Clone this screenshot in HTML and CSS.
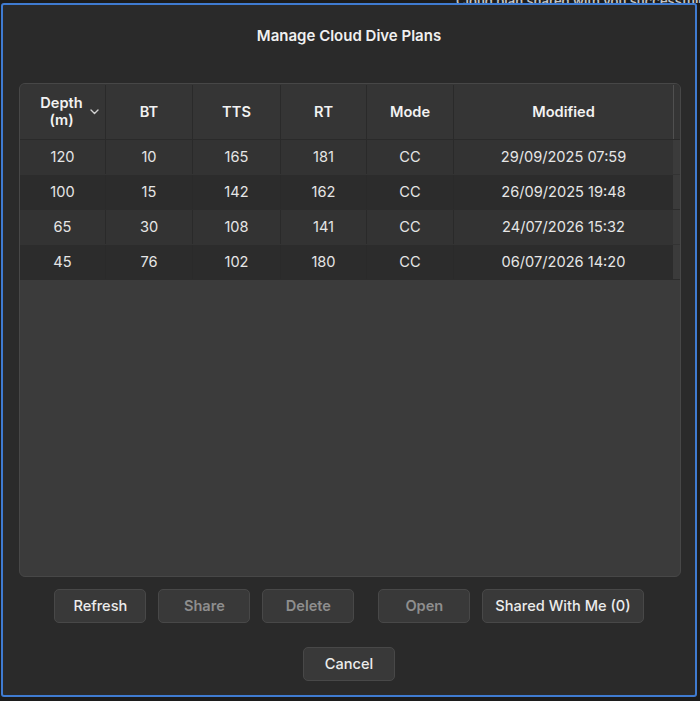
FILE: index.html
```html
<!DOCTYPE html>
<html lang="en">

<head>
    <meta charset="UTF-8">
    <title>Manage Cloud Dive Plans</title>
    <link rel="stylesheet" href="styles.css">
</head>

<body>
    <div class="backdrop"><span>Cloud plan shared with you successfully</span></div>
    <div class="dialog">
        <h1 class="title">Manage Cloud Dive Plans</h1>

        <div class="plans">
            <div class="grid head">
                <div class="cell sort">
                    <span>Depth<br>(m)</span>
                    <svg class="chev" width="9" height="6" viewBox="0 0 9 6"><path d="M1 1 L4.5 4.5 L8 1" fill="none" stroke="#d0d0d0" stroke-width="1.4" stroke-linecap="round" stroke-linejoin="round"/></svg>
                </div>
                <div class="cell">BT</div>
                <div class="cell">TTS</div>
                <div class="cell">RT</div>
                <div class="cell">Mode</div>
                <div class="cell">Modified</div>
            </div>
            <div class="grid row">
                <div class="cell">120</div><div class="cell">10</div><div class="cell">165</div><div class="cell">181</div><div class="cell">CC</div><div class="cell">29/09/2025 07:59</div>
            </div>
            <div class="grid row alt">
                <div class="cell">100</div><div class="cell">15</div><div class="cell">142</div><div class="cell">162</div><div class="cell">CC</div><div class="cell">26/09/2025 19:48</div>
            </div>
            <div class="grid row">
                <div class="cell">65</div><div class="cell">30</div><div class="cell">108</div><div class="cell">141</div><div class="cell">CC</div><div class="cell">24/07/2026 15:32</div>
            </div>
            <div class="grid row alt">
                <div class="cell">45</div><div class="cell">76</div><div class="cell">102</div><div class="cell">180</div><div class="cell">CC</div><div class="cell">06/07/2026 14:20</div>
            </div>
            <div class="empty"></div>
        </div>

        <div class="actions">
            <button class="btn">Refresh</button>
            <button class="btn off">Share</button>
            <button class="btn off">Delete</button>
            <button class="btn off gapleft">Open</button>
            <button class="btn wide">Shared With Me (0)</button>
        </div>
        <div class="actions last">
            <button class="btn">Cancel</button>
        </div>
    </div>
</body>

</html>
```

FILE: styles.css
```css
* {
    box-sizing: border-box;
}

body {
    margin: 0;
    width: 700px;
    height: 701px;
    background: #1c1c1c;
    font-family: Inter, "Liberation Sans", sans-serif;
    color: #e8e8e8;
    overflow: hidden;
}

.backdrop {
    height: 3px;
    overflow: hidden;
    padding-left: 456px;
    white-space: nowrap;
    font-size: 13px;
    font-weight: 600;
    line-height: 2px;
    color: #c4c4c4;
}

.dialog {
    margin-left: 1px;
    width: 696px;
    height: 694px;
    background: #2a2a2a;
    border: 2px solid #3f7bd1;
    border-radius: 3px;
    display: flex;
    flex-direction: column;
    align-items: center;
}

.title {
    margin: 0;
    height: 78px;
    padding-top: 21px;
    font-size: 15px;
    font-weight: 600;
    color: #f0f0f0;
}

.plans {
    width: 662px;
    height: 494px;
    margin-left: 2px;
    border: 1px solid #474747;
    border-radius: 6px;
    background: #3b3b3b;
    overflow: hidden;
    display: flex;
    flex-direction: column;
}

.grid {
    display: grid;
    grid-template-columns: 86px 87px 88px 86px 87px 219px 7px;
    font-size: 14.6px;
}

.grid::after {
    content: "";
    background: #353535;
    border-left: 1px solid #505050;
}

.head {
    height: 56px;
    padding-top: 1px;
    background: #353535;
    font-weight: 600;
    color: #f2f2f2;
    border-bottom: 1px solid #2a2a2a;
}

.head .cell {
    line-height: 17px;
}

.row {
    height: 35px;
    padding-bottom: 1px;
    background: #333333;
    color: #e6e6e6;
}

.row.alt {
    background: #2c2c2c;
}

.row::after {
    background: #3b3b3b;
    border-left: none;
}

.cell {
    display: flex;
    align-items: center;
    justify-content: center;
    text-align: center;
    border-right: 1px solid #2a2a2a;
}

.head .cell:nth-child(6),
.row .cell:nth-child(6) {
    border-right: none;
}

.sort {
    gap: 7px;
    padding-left: 14px;
}

.chev {
    margin-top: -1px;
}

.empty {
    flex: 1;
}

.actions {
    display: flex;
    gap: 12px;
    margin-top: 12px;
}

.actions.last {
    margin-top: 24px;
}

.btn {
    min-width: 92px;
    height: 34px;
    padding: 0 13px;
    background: #393939;
    border: 1px solid #484848;
    border-radius: 5px;
    color: #ececec;
    font-family: Inter, "Liberation Sans", sans-serif;
    font-size: 14.6px;
    font-weight: 500;
}

.btn.off {
    color: #8e8e8e;
    font-weight: 600;
}

.btn.wide {
    padding: 0 12px;
}

.gapleft {
    margin-left: 12px;
}
```
